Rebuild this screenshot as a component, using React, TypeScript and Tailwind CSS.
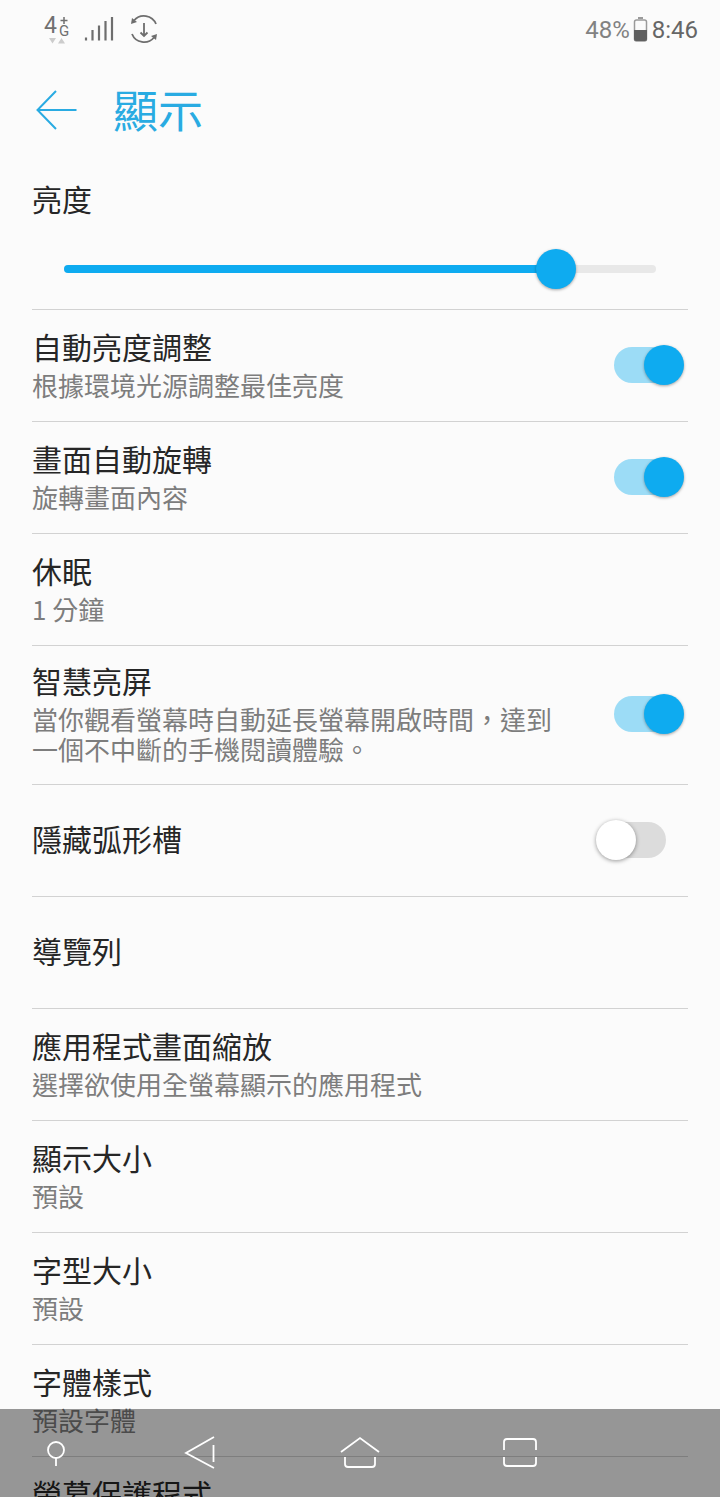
import React from "react";

const CJK = "font-['Noto_Sans_CJK_TC','Noto_Sans_CJK_SC',sans-serif]";

function Toggle({ on }: { on: boolean }) {
  if (on) {
    return (
      <div className="relative w-[70px] h-[40px] shrink-0">
        <div className="absolute left-0 top-[2px] w-[60px] h-[36px] rounded-full bg-[#9cdcf6]" />
        <div className="absolute right-0 top-0 w-[40px] h-[40px] rounded-full bg-[#0eabf0] shadow-[0_1px_3px_rgba(0,0,0,0.35)]" />
      </div>
    );
  }
  return (
    <div className="relative w-[70px] h-[40px] shrink-0">
      <div className="absolute right-0 top-[2px] w-[60px] h-[36px] rounded-full bg-[#dcdcdc]" />
      <div className="absolute left-0 top-0 w-[40px] h-[40px] rounded-full bg-white shadow-[0_1px_4px_rgba(0,0,0,0.4)]" />
    </div>
  );
}

type RowP = { title: string; sub?: string; toggle?: "on" | "off" };

function Row({ title, sub, toggle }: RowP) {
  return (
    <div className="h-[112px] border-b border-[#d2d2d2] flex items-center justify-between">
      <div className={sub ? "mt-[-1px]" : "mt-[-5px]"}>
        <div className="text-[30px] leading-[38px] text-[#262626]">{title}</div>
        {sub && <div className="text-[26px] leading-[38px] text-[#7d7d7d] mt-[1px]">{sub}</div>}
      </div>
      {toggle === "on" && <div className="mr-[4px] mt-[-2px]"><Toggle on /></div>}
      {toggle === "off" && <div className="mr-[22px] mt-[-2px]"><Toggle on={false} /></div>}
    </div>
  );
}

function StatusBar() {
  return (
    <div className="h-[58px] flex items-start justify-between pl-[44px] pr-[22px]">
      <svg className="mt-[14px]" width="116" height="32" viewBox="44 14 116 32" fill="none">
        <path d="M64 17v7M60.500 20.500h7" stroke="#707070" strokeWidth="1.500" />
        <path d="M49 38h7l-3.500 5.500z" fill="#cccccc" />
        <path d="M58 43.500h7L61.500 38z" fill="#cccccc" />
        <g stroke="#6e6e6e" strokeWidth="2.200">
          <path d="M86 37.500v3" />
          <path d="M92.500 30v10.500" />
          <path d="M99 25.500v15" />
          <path d="M105.500 21v19.500" />
          <path d="M112 17v23.500" />
        </g>
        <g stroke="#6e6e6e" strokeWidth="1.800">
          <path d="M134 20.500A13 13 0 0 1 156 24" />
          <path d="M131 24l1-6 5 4z" fill="#6e6e6e" stroke="none" />
          <path d="M154 37.500A13 13 0 0 1 132 34" />
          <path d="M157 34l-1 6-5-4z" fill="#6e6e6e" stroke="none" />
          <path d="M144 23v13M140.500 32.500l3.500 3.500 3.500-3.500" />
        </g>
      </svg>
      <div className="absolute left-[44px] top-[14px] text-[23px] leading-[24px] text-[#707070] font-['Roboto',sans-serif]">4</div>
      <div className="absolute left-[59px] top-[23px] text-[15px] leading-[16px] text-[#707070] font-['Roboto',sans-serif]">G</div>
      <div className="flex items-center font-['Roboto',sans-serif] text-[24px] leading-[30px] mt-[15px]">
        <span className="text-[#828282]">48%</span>
        <svg className="mx-[3px]" width="16" height="26" viewBox="0 0 16 26">
          <rect x="5" y="0" width="5" height="2" fill="#9a9a9a" />
          <rect x="1.500" y="3" width="12" height="21" rx="2" fill="none" stroke="#9a9a9a" strokeWidth="1.500" />
          <path d="M1 13h13v9a2 2 0 0 1-2 2H3a2 2 0 0 1-2-2z" fill="#5f5f5f" />
        </svg>
        <span className="text-[#666666]">8:46</span>
      </div>
    </div>
  );
}

export default function App() {
  return (
    <div className={`relative w-[720px] h-[1497px] overflow-hidden bg-[#fbfbfb] ${CJK}`}>
      <StatusBar />
      <div className="h-[104px] flex items-center pl-[36px]">
        <svg width="41" height="42" viewBox="0 0 41 42" fill="none" stroke="#29abe2" strokeWidth="2">
          <path d="M20 2L1.500 21 20 40M1.500 21H40.500" />
        </svg>
        <div className="ml-[36px] text-[45px] leading-[56px] text-[#29abe2] mt-[-3px]">顯示</div>
      </div>
      <div className="px-[32px]">
        <div className="h-[148px] border-b border-[#d2d2d2]">
          <div className="text-[30px] leading-[38px] text-[#262626] pt-[17px] h-[61px] box-content">亮度</div>
          <div className="relative mx-[32px] h-[8px] rounded-full bg-[#e8e8e8] mt-[25px]">
            <div className="absolute left-0 top-0 h-[8px] w-[490px] rounded-full bg-[#0eabf0]" />
            <div className="absolute left-[472px] top-[-16px] w-[40px] h-[40px] rounded-full bg-[#0eabf0] shadow-[0_1px_3px_rgba(0,0,0,0.35)]" />
          </div>
        </div>
        <Row title="自動亮度調整" sub="根據環境光源調整最佳亮度" toggle="on" />
        <Row title="畫面自動旋轉" sub="旋轉畫面內容" toggle="on" />
        <Row title="休眠" sub="1 分鐘" />
        <div className="h-[139px] border-b border-[#d2d2d2] flex items-center justify-between">
          <div className="mt-[-1px]">
            <div className="text-[30px] leading-[38px] text-[#262626] mt-[-5px]">智慧亮屏</div>
            <div className="text-[26px] leading-[30px] text-[#7d7d7d] mt-[5px]">
              {"當你觀看螢幕時自動延長螢幕開啟時間\uFF0C達到"}
              <br />
              一個不中斷的手機閱讀體驗。
            </div>
          </div>
          <div className="mr-[4px] mt-[-2px]"><Toggle on /></div>
        </div>
        <Row title="隱藏弧形槽" toggle="off" />
        <Row title="導覽列" />
        <Row title="應用程式畫面縮放" sub="選擇欲使用全螢幕顯示的應用程式" />
        <Row title="顯示大小" sub="預設" />
        <Row title="字型大小" sub="預設" />
        <Row title="字體樣式" sub="預設字體" />
        <Row title="螢幕保護程式" sub="關閉" />
      </div>
      <div className="absolute left-0 right-0 bottom-0 h-[88px] bg-[rgba(0,0,0,0.4)]">
        <svg className="absolute left-0 top-0" width="720" height="88" viewBox="0 0 720 88" fill="none" stroke="#ffffff" strokeWidth="1.800">
          <circle cx="56" cy="41" r="8" />
          <path d="M56 49v8" />
          <path d="M214 28L186 44l28 15M213.500 36v17" />
          <path d="M341 43l19-14 19 14M345 48v7a3 3 0 0 0 3 3h24a3 3 0 0 0 3-3v-7" />
          <path d="M504 41v-8a3 3 0 0 1 3-3h26a3 3 0 0 1 3 3v8M504 48v6a3 3 0 0 0 3 3h26a3 3 0 0 0 3-3v-6" />
        </svg>
      </div>
    </div>
  );
}
